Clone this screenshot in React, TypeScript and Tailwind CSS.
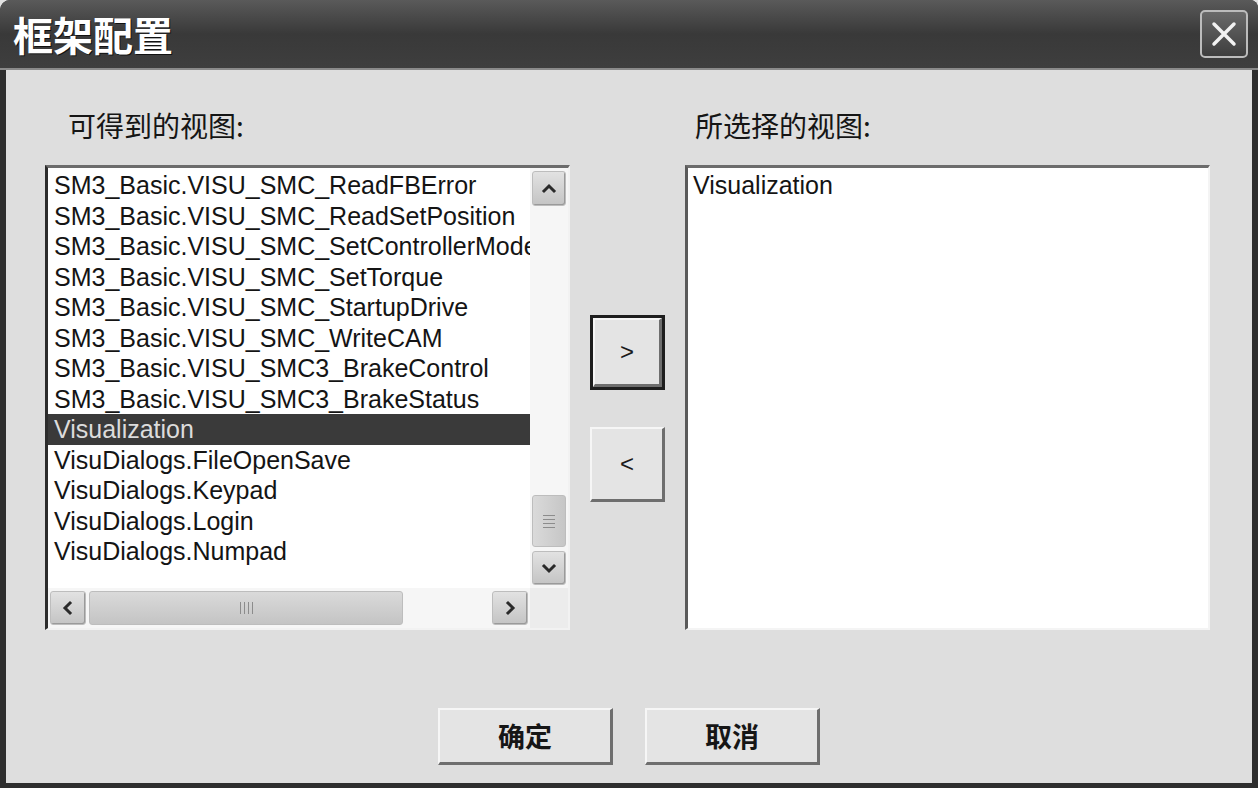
import React from 'react';

const leftItems = [
  'SM3_Basic.VISU_SMC_ReadFBError',
  'SM3_Basic.VISU_SMC_ReadSetPosition',
  'SM3_Basic.VISU_SMC_SetControllerMode',
  'SM3_Basic.VISU_SMC_SetTorque',
  'SM3_Basic.VISU_SMC_StartupDrive',
  'SM3_Basic.VISU_SMC_WriteCAM',
  'SM3_Basic.VISU_SMC3_BrakeControl',
  'SM3_Basic.VISU_SMC3_BrakeStatus',
  'Visualization',
  'VisuDialogs.FileOpenSave',
  'VisuDialogs.Keypad',
  'VisuDialogs.Login',
  'VisuDialogs.Numpad',
];

const SELECTED = 'Visualization';

function Chevron({ dir }: { dir: 'up' | 'down' | 'left' | 'right' }) {
  const pts = {
    up: '5,12 10,7 15,12',
    down: '5,8 10,13 15,8',
    left: '12,5 7,10 12,15',
    right: '8,5 13,10 8,15',
  }[dir];
  return (
    <svg width="20" height="20" viewBox="0 0 20 20">
      <polyline points={pts} fill="none" stroke="#2a2a2a" strokeWidth="3" strokeLinecap="square" />
    </svg>
  );
}

function ScrollButton({ dir, className = '' }: { dir: 'up' | 'down' | 'left' | 'right'; className?: string }) {
  return (
    <div
      className={`flex items-center justify-center rounded-[3px] border border-[#bdbdbd] bg-gradient-to-b from-[#e2e2e2] to-[#c4c4c4] shadow-[inset_-1px_-1px_0_#9a9a9a] ${className}`}
    >
      <Chevron dir={dir} />
    </div>
  );
}

function XpButton({ children, focused, className = '' }: { children: React.ReactNode; focused?: boolean; className?: string }) {
  return (
    <div className={`${focused ? 'border-[3px] border-[#1e1e1e]' : ''} ${className}`}>
      <div className="flex h-full w-full items-center justify-center border-t-2 border-l-2 border-t-[#f6f6f6] border-l-[#f6f6f6] border-b-[3px] border-r-[3px] border-b-[#6e6e6e] border-r-[#6e6e6e] bg-[#e4e4e4]">
        {children}
      </div>
    </div>
  );
}

export default function App() {
  const cjk = { fontFamily: '"Noto Sans CJK SC", "Liberation Sans", sans-serif' };
  const latin = { fontFamily: '"Liberation Sans", Arial, sans-serif' };

  return (
    <div className="h-[788px] w-[1258px] overflow-hidden bg-[#e2e2e2]">
      <div className="flex h-full w-full flex-col rounded-tl-[10px] rounded-tr-[8px] bg-[#2e2e2e]">
        {/* Title bar */}
        <div className="flex h-[70px] shrink-0 items-center justify-between rounded-tl-[10px] rounded-tr-[8px] border-b-2 border-b-[#8a8a8a] bg-gradient-to-b from-[#5a5a5a] via-[#393939] to-[#3e3e3e] pl-[13px] pr-[10px]">
          <div className="text-[40px] font-bold leading-none text-white [text-shadow:1px_1px_0_#111]" style={cjk}>
            框架配置
          </div>
          <div className="flex h-[48px] w-[48px] items-center justify-center rounded-[5px] border-2 border-[#bcbcbc] bg-gradient-to-b from-[#6a6a6a] to-[#3e3e3e]">
            <svg width="30" height="30" viewBox="0 0 30 30">
              <path d="M5 5 L25 25 M25 5 L5 25" stroke="#f2f2f2" strokeWidth="3.5" strokeLinecap="round" />
            </svg>
          </div>
        </div>

        {/* Body */}
        <div className="mb-[5px] ml-[6px] mr-[6px] flex flex-1 flex-col bg-[#dedede]">
          <div className="flex pt-[40px]">
            {/* Left column */}
            <div className="ml-[39px] flex w-[525px] flex-col">
              <div className="h-[30px] pl-[23px] text-[28px] leading-[30px] text-[#151515]" style={cjk}>
                可得到的视图:
              </div>
              <div className="mt-[25px] flex h-[465px] flex-col border-t-[3px] border-l-[3px] border-t-[#6c6c6c] border-l-[#2c2c2c] border-b-2 border-r-2 border-b-[#f2f2f2] border-r-[#f2f2f2] bg-white">
                <div className="flex min-h-0 flex-1">
                  <div className="flex-1 overflow-hidden pt-[2px]" style={latin}>
                    {leftItems.map((item) => (
                      <div
                        key={item}
                        className={`h-[30.5px] whitespace-nowrap pl-[6px] text-[25px] leading-[30px] ${
                          item === SELECTED ? 'bg-[#3a3a3a] text-[#dcdcdc]' : 'text-[#141414]'
                        }`}
                      >
                        {item}
                      </div>
                    ))}
                  </div>
                  {/* Vertical scrollbar */}
                  <div className="flex w-[38px] flex-col bg-[#f6f6f6] px-[2px] py-[3px]">
                    <ScrollButton dir="up" className="h-[35px]" />
                    <div className="flex-1" />
                    <div className="mb-[4px] flex h-[52px] flex-col items-center justify-center gap-[3px] rounded-[3px] border border-[#bdbdbd] bg-gradient-to-r from-[#dadada] to-[#c6c6c6]">
                      <div className="h-px w-[12px] bg-[#8c8c8c]" />
                      <div className="h-px w-[12px] bg-[#8c8c8c]" />
                      <div className="h-px w-[12px] bg-[#8c8c8c]" />
                      <div className="h-px w-[12px] bg-[#8c8c8c]" />
                    </div>
                    <ScrollButton dir="down" className="h-[34px]" />
                  </div>
                </div>
                {/* Horizontal scrollbar */}
                <div className="flex h-[40px] shrink-0">
                  <div className="flex flex-1 items-center bg-[#f6f6f6] px-[2px] py-[3px]">
                    <ScrollButton dir="left" className="h-[34px] w-[36px]" />
                    <div className="ml-[3px] flex h-[34px] w-[314px] items-center justify-center gap-[3px] rounded-[3px] border border-[#bdbdbd] bg-gradient-to-b from-[#dadada] to-[#c4c4c4]">
                      <div className="h-[12px] w-px bg-[#8c8c8c]" />
                      <div className="h-[12px] w-px bg-[#8c8c8c]" />
                      <div className="h-[12px] w-px bg-[#8c8c8c]" />
                      <div className="h-[12px] w-px bg-[#8c8c8c]" />
                    </div>
                    <div className="flex-1" />
                    <ScrollButton dir="right" className="h-[34px] w-[36px]" />
                  </div>
                  <div className="w-[38px] bg-[#ececec]" />
                </div>
              </div>
            </div>

            {/* Middle buttons */}
            <div className="flex w-[115px] flex-col items-center pt-[205px]" style={latin}>
              <XpButton focused className="h-[75px] w-[75px]">
                <span className="text-[24px] text-[#1a1a1a]">&gt;</span>
              </XpButton>
              <XpButton className="mt-[37px] h-[75px] w-[75px]">
                <span className="text-[24px] text-[#1a1a1a]">&lt;</span>
              </XpButton>
            </div>

            {/* Right column */}
            <div className="flex w-[525px] flex-col">
              <div className="h-[30px] pl-[10px] text-[28px] leading-[30px] text-[#151515]" style={cjk}>
                所选择的视图:
              </div>
              <div className="mt-[25px] h-[465px] border-t-[3px] border-l-[3px] border-t-[#6c6c6c] border-l-[#5a5a5a] border-b-2 border-r-2 border-b-[#f4f4f4] border-r-[#f4f4f4] bg-white pt-[2px]" style={latin}>
                <div className="h-[30.5px] pl-[5px] text-[25px] leading-[30px] text-[#141414]">Visualization</div>
              </div>
            </div>
          </div>

          {/* Dialog buttons */}
          <div className="mt-[78px] flex justify-center gap-[32px]" style={cjk}>
            <XpButton className="h-[57px] w-[175px]">
              <span className="text-[27px] font-bold text-[#161616]">确定</span>
            </XpButton>
            <XpButton className="h-[57px] w-[175px]">
              <span className="text-[27px] font-bold text-[#161616]">取消</span>
            </XpButton>
          </div>
        </div>
      </div>
    </div>
  );
}
